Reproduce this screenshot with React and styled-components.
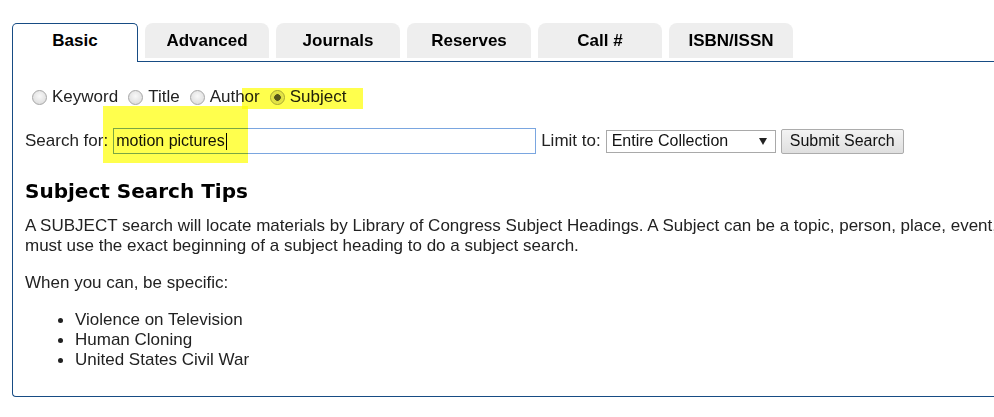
import React from "react";
import styled, { createGlobalStyle } from "styled-components";

const Global = createGlobalStyle`
  html, body { margin: 0; padding: 0; background: #fff; overflow: hidden; }
  body { font-family: "Liberation Sans", Arial, sans-serif; color: #222; }
`;

const BLUE = "#174c84";

const Page = styled.div`
  position: relative;
  width: 994px;
  height: 417px;
  overflow: hidden;
  padding: 23px 0 0 12px;
  box-sizing: border-box;
`;

const Wrap = styled.div`
  width: 1400px;
`;

const TabBar = styled.div`
  display: flex;
  align-items: flex-start;
  gap: 7px;
`;

const Tab = styled.div`
  box-sizing: border-box;
  position: relative;
  z-index: 1;
  text-align: center;
  font-weight: bold;
  font-size: 17px;
  color: #000;
  ${(p) =>
    p.$active
      ? `
    width: 126px;
    height: 39px;
    margin-bottom: -1px;
    background: #fff;
    border: 1px solid ${BLUE};
    border-bottom: none;
    border-radius: 5px 5px 0 0;
    line-height: 33px;
  `
      : `
    width: 124px;
    height: 35px;
    background: #eeeeee;
    border-radius: 8px 8px 0 0;
    line-height: 35px;
  `}
`;

const Panel = styled.div`
  border-top: 1px solid ${BLUE};
  border-left: 1px solid ${BLUE};
  border-bottom: 1px solid ${BLUE};
  border-bottom-left-radius: 4px;
  padding: 25px 0 26px 12px;
  white-space: nowrap;
  font-size: 17px;
  line-height: 20px;
  color: #222;
`;

const RadioRow = styled.div`
  display: flex;
  align-items: center;
  height: 20px;
`;

const Radio = styled.span`
  box-sizing: border-box;
  width: 15px;
  height: 15px;
  border-radius: 50%;
  border: 1px solid #a6a6a6;
  background: ${(p) =>
    p.$checked
      ? "radial-gradient(circle, #555 0, #555 3px, #dcdcdc 3.6px, #f4f4f4 100%)"
      : "radial-gradient(circle at 50% 40%, #f8f8f8 0, #e4e4e4 60%, #d4d4d4 100%)"};
  margin: 0 5px 0 10px;
  &:first-child { margin-left: 7px; }
`;

const SearchRow = styled.div`
  display: flex;
  align-items: center;
  height: 26px;
  margin-top: 21px;
`;

const Label = styled.span`
  margin-right: 5px;
`;

const TextBox = styled.div`
  box-sizing: border-box;
  width: 423px;
  height: 26px;
  border: 1px solid #7aa6e0;
  padding: 0 0 0 2px;
  font-size: 16px;
  display: flex;
  align-items: center;
  color: #111;
  margin-right: 5px;
`;

const Caret = styled.span`
  display: inline-block;
  width: 1px;
  height: 17px;
  background: #000;
  margin-left: 1px;
`;

const SelectBox = styled.div`
  box-sizing: border-box;
  width: 170px;
  height: 23px;
  border: 1px solid #a9a9a9;
  background: #fff;
  display: flex;
  align-items: center;
  padding-left: 5px;
  font-size: 16px;
  color: #111;
  margin-right: 5px;
`;

const Arrow = styled.span`
  margin-left: auto;
  margin-right: 8px;
  width: 0;
  height: 0;
  border-left: 4px solid transparent;
  border-right: 4px solid transparent;
  border-top: 7px solid #222;
`;

const Button = styled.button`
  box-sizing: border-box;
  width: 123px;
  height: 25px;
  padding: 0;
  border: 1px solid #acacac;
  border-radius: 2px;
  background: linear-gradient(#f3f3f3, #dfdfdf);
  font-family: "Liberation Sans", Arial, sans-serif;
  font-size: 16px;
  color: #111;
`;

const Heading = styled.h2`
  margin: 25px 0 0;
  font-family: "DejaVu Sans", Verdana, sans-serif;
  font-weight: bold;
  font-size: 20px;
  line-height: 24px;
  color: #000;
`;

const Para = styled.p`
  margin: ${(p) => (p.$first ? "13px" : "17px")} 0 0;
`;

const List = styled.ul`
  margin: 17px 0 0;
  padding-left: 50px;
  list-style: none;
`;

const Item = styled.li`
  &::before {
    content: "";
    display: inline-block;
    width: 5px;
    height: 5px;
    border-radius: 50%;
    background: #222;
    margin: 0 12px 0 -17px;
    vertical-align: middle;
  }
`;

const Highlight = styled.div`
  position: absolute;
  background: #ffff4d;
  mix-blend-mode: multiply;
  pointer-events: none;
`;

const tabs = ["Basic", "Advanced", "Journals", "Reserves", "Call #", "ISBN/ISSN"];
const options = ["Keyword", "Title", "Author", "Subject"];

export default function App() {
  return (
    <>
      <Global />
      <Page>
        <Wrap>
          <TabBar>
            {tabs.map((t, i) => (
              <Tab key={t} $active={i === 0}>
                {t}
              </Tab>
            ))}
          </TabBar>
          <Panel>
            <RadioRow>
              {options.map((o) => (
                <React.Fragment key={o}>
                  <Radio $checked={o === "Subject"} />
                  <span>{o}</span>
                </React.Fragment>
              ))}
            </RadioRow>
            <SearchRow>
              <Label>Search for:</Label>
              <TextBox>
                motion pictures
                <Caret />
              </TextBox>
              <Label>Limit to:</Label>
              <SelectBox>
                Entire Collection
                <Arrow />
              </SelectBox>
              <Button>Submit Search</Button>
            </SearchRow>
            <Heading>Subject Search Tips</Heading>
            <Para $first>
              A SUBJECT search will locate materials by Library of Congress Subject Headings. A Subject can be a topic, person, place, event, or thing. You
              <br />
              must use the exact beginning of a subject heading to do a subject search.
            </Para>
            <Para>When you can, be specific:</Para>
            <List>
              <Item>Violence on Television</Item>
              <Item>Human Cloning</Item>
              <Item>United States Civil War</Item>
            </List>
          </Panel>
        </Wrap>
        <Highlight style={{ left: 242, top: 88, width: 121, height: 21 }} />
        <Highlight style={{ left: 103, top: 106, width: 145, height: 57 }} />
      </Page>
    </>
  );
}
